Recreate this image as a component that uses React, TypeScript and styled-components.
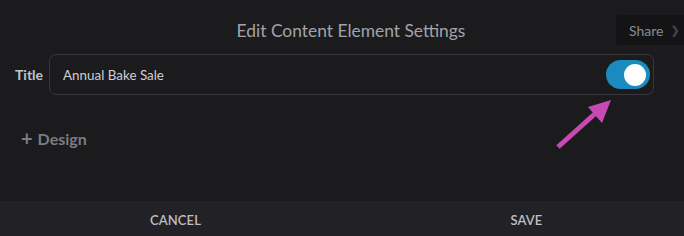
import React from "react";
import styled, { createGlobalStyle } from "styled-components";

const GlobalStyle = createGlobalStyle`
  html, body {
    margin: 0;
    padding: 0;
    background: #1b1b1d;
    overflow: hidden;
  }
  body {
    font-family: Lato, "Open Sans", sans-serif;
  }
`;

const Page = styled.main`
  position: relative;
  width: 702px;
  height: 239px;
  display: flex;
  flex-direction: column;
  background: #1b1b1d;
`;

const Header = styled.header`
  display: grid;
  grid-template-columns: 1fr auto 1fr;
  align-items: center;
  padding-top: 15px;
  height: 30px;
`;

const Heading = styled.h1`
  grid-column: 2;
  margin: 0;
  font-size: 17.4px;
  font-weight: 400;
  color: #a3a3aa;
`;

const ShareButton = styled.button`
  grid-column: 3;
  justify-self: end;
  height: 30px;
  width: 86px;
  display: flex;
  align-items: center;
  gap: 7px;
  padding: 0 0 0 13px;
  border: none;
  border-radius: 3px 0 0 3px;
  background: #141416;
  color: #8b8b90;
  font-family: inherit;
  font-size: 14px;
`;

const Chevron = styled.span`
  color: #4a4a4f;
  font-family: "DejaVu Sans", sans-serif;
  font-size: 11px;
  line-height: 1;
`;

const FieldRow = styled.div`
  display: flex;
  align-items: center;
  gap: 6px;
  margin-top: 9px;
  padding: 0 48px 0 15px;
`;

const Label = styled.label`
  font-size: 14px;
  font-weight: 700;
  color: #c2c2c7;
`;

const InputBox = styled.div`
  flex: 1;
  height: 39px;
  display: flex;
  align-items: center;
  justify-content: space-between;
  padding: 0 3px 0 13px;
  border: 1px solid #38383c;
  border-radius: 7px;
`;

const InputText = styled.span`
  font-size: 13.4px;
  color: #cfcfd4;
`;

const Toggle = styled.div<{ $on: boolean }>`
  width: 44px;
  height: 29px;
  border-radius: 15px;
  background: ${(p) => (p.$on ? "#1b8bbf" : "#444")};
  display: flex;
  align-items: center;
  justify-content: ${(p) => (p.$on ? "flex-end" : "flex-start")};
  padding: 0 4px;
  box-sizing: border-box;
`;

const Knob = styled.div`
  width: 22px;
  height: 22px;
  border-radius: 50%;
  background: #ffffff;
`;

const DesignRow = styled.div`
  display: flex;
  align-items: center;
  gap: 5px;
  margin-top: 34px;
  padding-left: 21px;
  font-size: 16px;
  font-weight: 700;
  color: #7c7c81;
`;

const Plus = styled.span`
  font-size: 20px;
  font-weight: 700;
  line-height: 1;
  margin-top: -2px;
`;

const Spacer = styled.div`
  flex: 1;
`;

const Footer = styled.footer`
  height: 38px;
  display: grid;
  grid-template-columns: 1fr 1fr;
  background: #222226;
`;

const FooterButton = styled.button`
  border: none;
  background: transparent;
  color: #bdbdc2;
  font-family: inherit;
  font-size: 13px;
  font-weight: 600;
  letter-spacing: 0.1px;
`;

const Pointer = styled.svg`
  position: absolute;
  left: 550px;
  top: 95px;
`;

export default function App() {
  return (
    <Page>
      <GlobalStyle />
      <Header>
        <Heading>Edit Content Element Settings</Heading>
        <ShareButton>
          Share <Chevron>❯</Chevron>
        </ShareButton>
      </Header>
      <FieldRow>
        <Label>Title</Label>
        <InputBox>
          <InputText>Annual Bake Sale</InputText>
          <Toggle $on={true}>
            <Knob />
          </Toggle>
        </InputBox>
      </FieldRow>
      <DesignRow>
        <Plus>+</Plus>
        Design
      </DesignRow>
      <Spacer />
      <Footer>
        <FooterButton>CANCEL</FooterButton>
        <FooterButton>SAVE</FooterButton>
      </Footer>
      <Pointer width="70" height="60" viewBox="550 95 70 60">
        <line x1="558" y1="147" x2="598" y2="111" stroke="#c749b2" strokeWidth="5" />
        <polygon points="611,100 588,107 602,123" fill="#c749b2" />
      </Pointer>
    </Page>
  );
}
